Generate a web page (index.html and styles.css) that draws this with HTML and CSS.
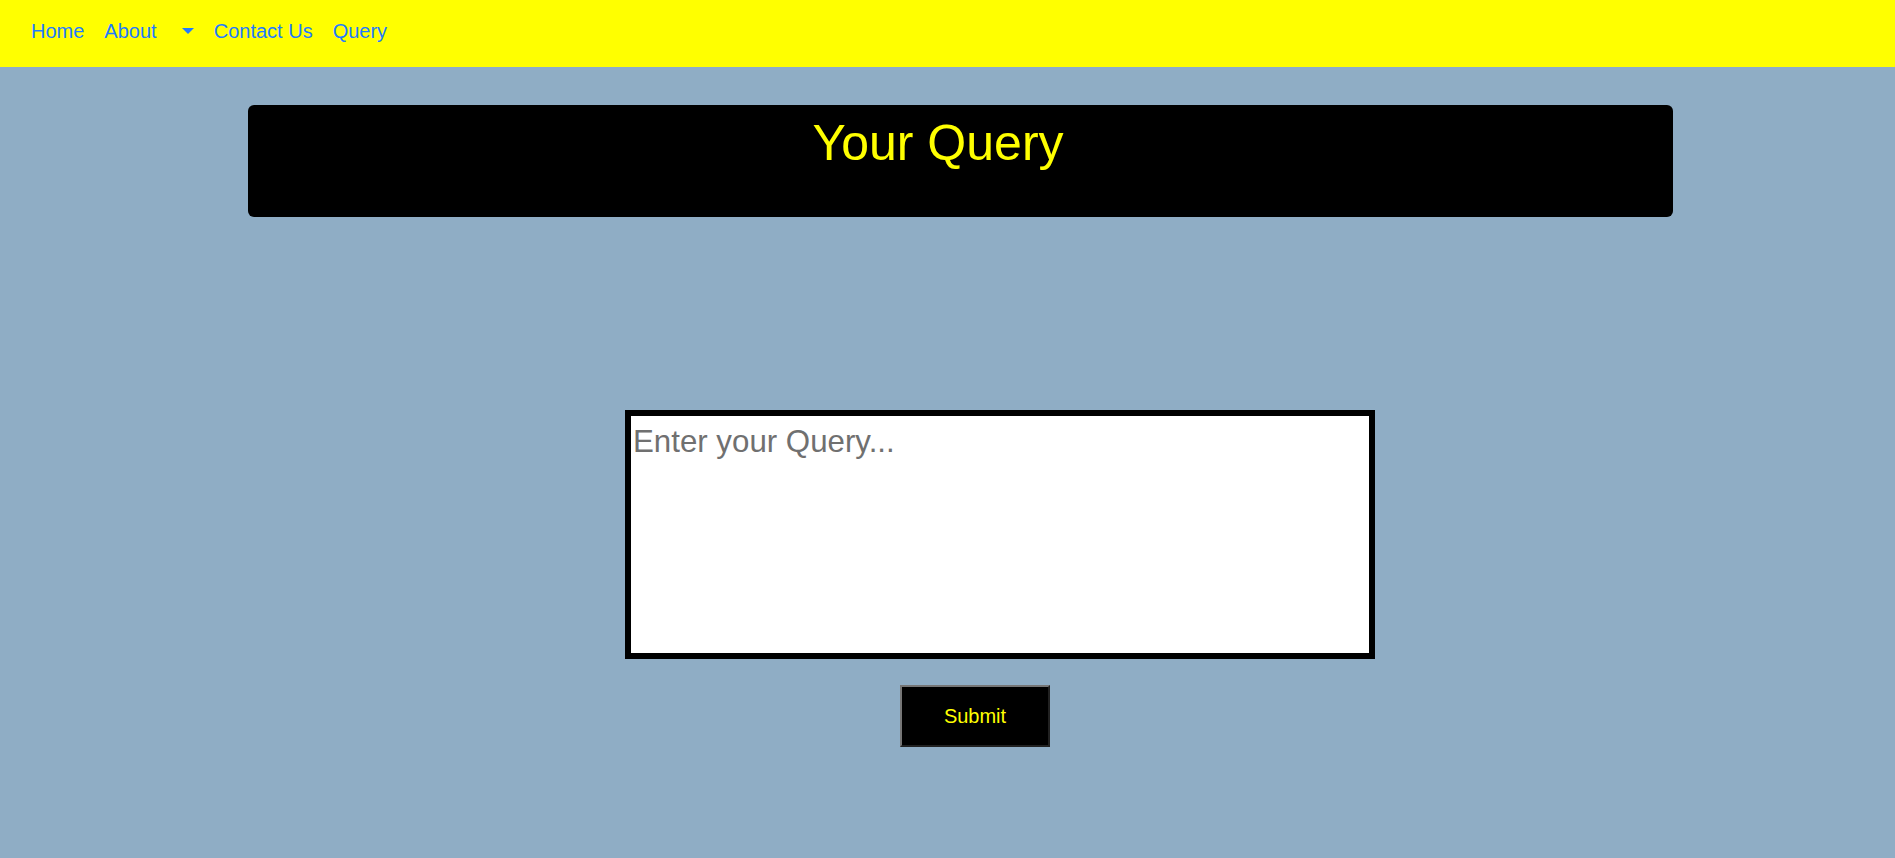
FILE: index.html
```html
<!DOCTYPE html>
<html lang="en">
<head>
<meta charset="utf-8">
<title>Your Query</title>
<link rel="stylesheet" href="styles.css">
</head>
<body>
<nav class="navbar">
  <a class="nav-link" href="#">Home</a>
  <a class="nav-link" href="#">About</a>
  <a class="nav-link toggle" href="#"><span class="caret"></span></a>
  <a class="nav-link" href="#">Contact Us</a>
  <a class="nav-link" href="#">Query</a>
</nav>
<header class="banner">
  <h1 class="title">Your Query</h1>
</header>
<form class="query-form">
  <textarea class="query-box" placeholder="Enter your Query..."></textarea>
  <button class="submit" type="button">Submit</button>
</form>
</body>
</html>
```
FILE: styles.css
```css
* { box-sizing: border-box; }
html, body { margin: 0; padding: 0; }
body {
  background: #8fadc5;
  font-family: "Liberation Sans", Arial, sans-serif;
  font-size: 20px;
  line-height: 1.5;
  min-height: 858px;
}
.navbar {
  display: flex;
  align-items: center;
  background: #ffff00;
  padding: 0 0 5px 21px;
  height: 67px;
}
.nav-link {
  display: block;
  padding: 0 10px;
  color: #1f7bff;
  text-decoration: none;
}
.toggle { display: flex; align-items: center; height: 30px; }
.caret {
  display: inline-block;
  margin-left: 5.1px;
  width: 0;
  height: 0;
  border-top: 6px solid #1f7bff;
  border-left: 6px solid transparent;
  border-right: 6px solid transparent;
}
.banner {
  margin: 38px 0 0 248px;
  width: 1425px;
  height: 112px;
  background: #000;
  border-radius: 6px;
  padding-top: 8px;
  padding-right: 45px;
}
.title {
  margin: 0;
  text-align: center;
  color: #ffff00;
  font-weight: 400;
  font-size: 50px;
  line-height: 1.2;
}
.query-form {
  display: flex;
  flex-direction: column;
  align-items: flex-start;
  margin-top: 193px;
}
.query-box {
  display: block;
  margin-left: 625px;
  width: 750px;
  height: 249px;
  border: 6px solid #000;
  padding: 3px 2px 0;
  background: #fff;
  font-family: "Liberation Sans", Arial, sans-serif;
  font-size: 31.25px;
  line-height: 1.5;
  resize: none;
}
.query-box::placeholder { color: #707070; }
.submit {
  margin: 26px 0 0 900px;
  width: 150px;
  height: 62px;
  background: #000;
  color: #ffff00;
  font-family: "Liberation Sans", Arial, sans-serif;
  font-size: 20px;
  border: 2px outset #767676;
}
```
